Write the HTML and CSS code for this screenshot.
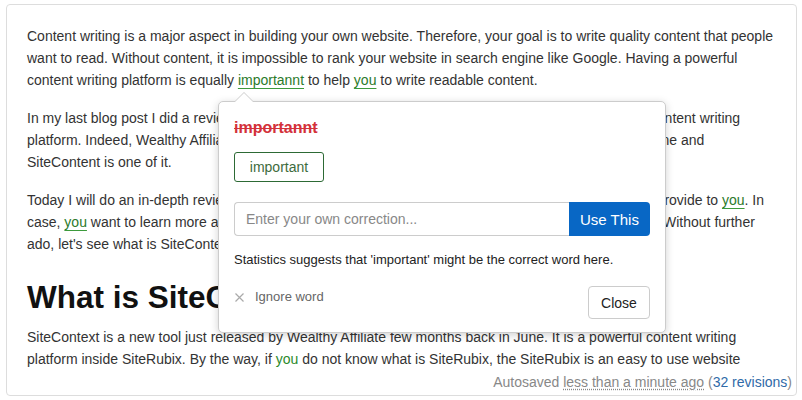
FILE: index.html
```html
<!DOCTYPE html>
<html lang="en">
<head>
    <meta charset="UTF-8">
    <title>Spell Check Editor</title>
    <link rel="stylesheet" href="styles.css">
</head>
<body>

<div class="editor">
    <div class="content">
        <p>Content writing is a major aspect in building your own website. Therefore, your goal is to write quality content that people<br>want to read. Without content, it is impossible to rank your website in search engine like Google. Having a powerful<br>content writing platform is equally <span class="mark">importannt</span> to help <span class="mark">you</span> to write readable content.</p>

        <p>In my last blog post I did a review of Wealthy Affiliate, which I feel is the best online training and also content writing<br>platform. Indeed, Wealthy Affiliate has lots of great tools to help you to build your very own website online and<br>SiteContent is one of it.</p>

        <p>Today I will do an in-depth review of SiteContent and show you all the amazing features that they can provide to <span class="mark">you</span>. In<br>case, <span class="mark">you</span> want to learn more about Wealthy Affiliate itself, feel free to check out my latest review here. Without further<br>ado, let's see what is SiteContent.</p>

        <h2>What is SiteContent?</h2>

        <p>SiteContext is a new tool just released by Wealthy Affiliate few months back in June. It is a powerful content writing<br>platform inside SiteRubix. By the way, if <span class="hint">you</span> do not know what is SiteRubix, the SiteRubix is an easy to use website<br>builder for everyone.</p>
    </div>

    <div class="footer">
        Autosaved <span class="dotted">less than a minute ago</span> (<a href="#" class="revisions">32 revisions</a>)
    </div>

    <!-- Spelling suggestion popup -->
    <div class="popup">
        <div class="wrong">importannt</div>
        <button class="suggestion">important</button>

        <div class="correction">
            <input type="text" placeholder="Enter your own correction...">
            <button class="use-btn">Use This</button>
        </div>

        <div class="stats">Statistics suggests that 'important' might be the correct word here.</div>

        <div class="popup-footer">
            <span class="ignore">
                <svg width="9" height="9" viewBox="0 0 9 9"><path d="M0.5 0.5 L8.5 8.5 M8.5 0.5 L0.5 8.5" stroke="#aaa" stroke-width="1.2"/></svg>
                Ignore word
            </span>
            <button class="close-btn">Close</button>
        </div>
    </div>
</div>

</body>
</html>
```

FILE: styles.css
```css
body {
    font-family: "Liberation Sans", Arial, sans-serif;
    background-color: #fff;
    color: #333;
    margin: 0;
    padding: 0;
}
.editor {
    position: relative;
    height: 392px;
    box-sizing: border-box;
    margin: 4px 5px 0 6px;
    padding: 20px 0 2px 0;
    border: 1px solid #ddd;
    border-radius: 4px;
    display: flex;
    flex-direction: column;
}
.content {
    flex: 1;
    overflow: hidden;
    padding: 0 20px;
    font-size: 14px;
    line-height: 22px;
}
.content p {
    margin: 0 0 16px;
    white-space: nowrap;
}
.content h2 {
    font-size: 31.5px;
    line-height: 37px;
    color: #111;
    margin: 24px 0 10px;
}
.mark {
    color: #2b7a2b;
    text-decoration: underline;
    text-decoration-color: #3c9a3c;
    text-underline-offset: 3px;
}
.hint {
    color: #2b8a2b;
}
.footer {
    text-align: right;
    padding: 0 4px;
    font-size: 14px;
    line-height: 22px;
    color: #888;
}
.dotted {
    text-decoration: underline dotted;
    text-underline-offset: 2px;
}
.revisions {
    color: #2f6aa8;
    text-decoration: none;
}

/* popup */
.popup {
    position: absolute;
    left: 211px;
    top: 96px;
    width: 448px;
    height: 232px;
    box-sizing: border-box;
    padding: 16px 15px 0 15px;
    background: #fff;
    border: 1px solid #ccc;
    border-radius: 5px;
    box-shadow: 0 2px 8px rgba(0, 0, 0, 0.18);
    font-size: 13px;
    color: #222;
}
.popup::before, .popup::after {
    content: "";
    position: absolute;
    left: 15px;
    top: -10px;
    border-left: 10px solid transparent;
    border-right: 10px solid transparent;
    border-bottom: 10px solid #ccc;
}
.popup::after {
    top: -9px;
    border-bottom-color: #fff;
}
.wrong {
    font-size: 16px;
    font-weight: bold;
    color: #d3313a;
    text-decoration: line-through;
    line-height: 20px;
}
.suggestion {
    display: block;
    margin-top: 14px;
    width: 90px;
    height: 30px;
    background: #fff;
    border: 1px solid #2d6a35;
    border-radius: 3px;
    color: #3d6b3d;
    font-family: inherit;
    font-size: 14px;
    cursor: pointer;
}
.correction {
    display: flex;
    margin-top: 20px;
    height: 34px;
}
.correction input {
    flex: 1;
    border: 1px solid #ccc;
    border-right: none;
    border-radius: 4px 0 0 4px;
    padding: 0 11px;
    font-family: inherit;
    font-size: 14px;
    outline: none;
}
.correction input::placeholder {
    color: #888;
}
.use-btn {
    width: 81px;
    border: none;
    border-radius: 0 4px 4px 0;
    background-color: #0867c5;
    color: #fff;
    font-family: inherit;
    font-size: 15px;
    cursor: pointer;
}
.stats {
    margin-top: 15px;
    line-height: 18px;
}
.popup-footer {
    display: flex;
    justify-content: space-between;
    align-items: flex-start;
    margin-top: 17px;
}
.ignore {
    display: flex;
    align-items: center;
    gap: 11px;
    padding: 2px 0 0 1px;
    line-height: 18px;
    color: #666;
    font-size: 13px;
}
.close-btn {
    width: 62px;
    height: 33px;
    background: #fff;
    border: 1px solid #ccc;
    border-radius: 4px;
    color: #222;
    font-family: inherit;
    font-size: 14px;
    cursor: pointer;
}
```
